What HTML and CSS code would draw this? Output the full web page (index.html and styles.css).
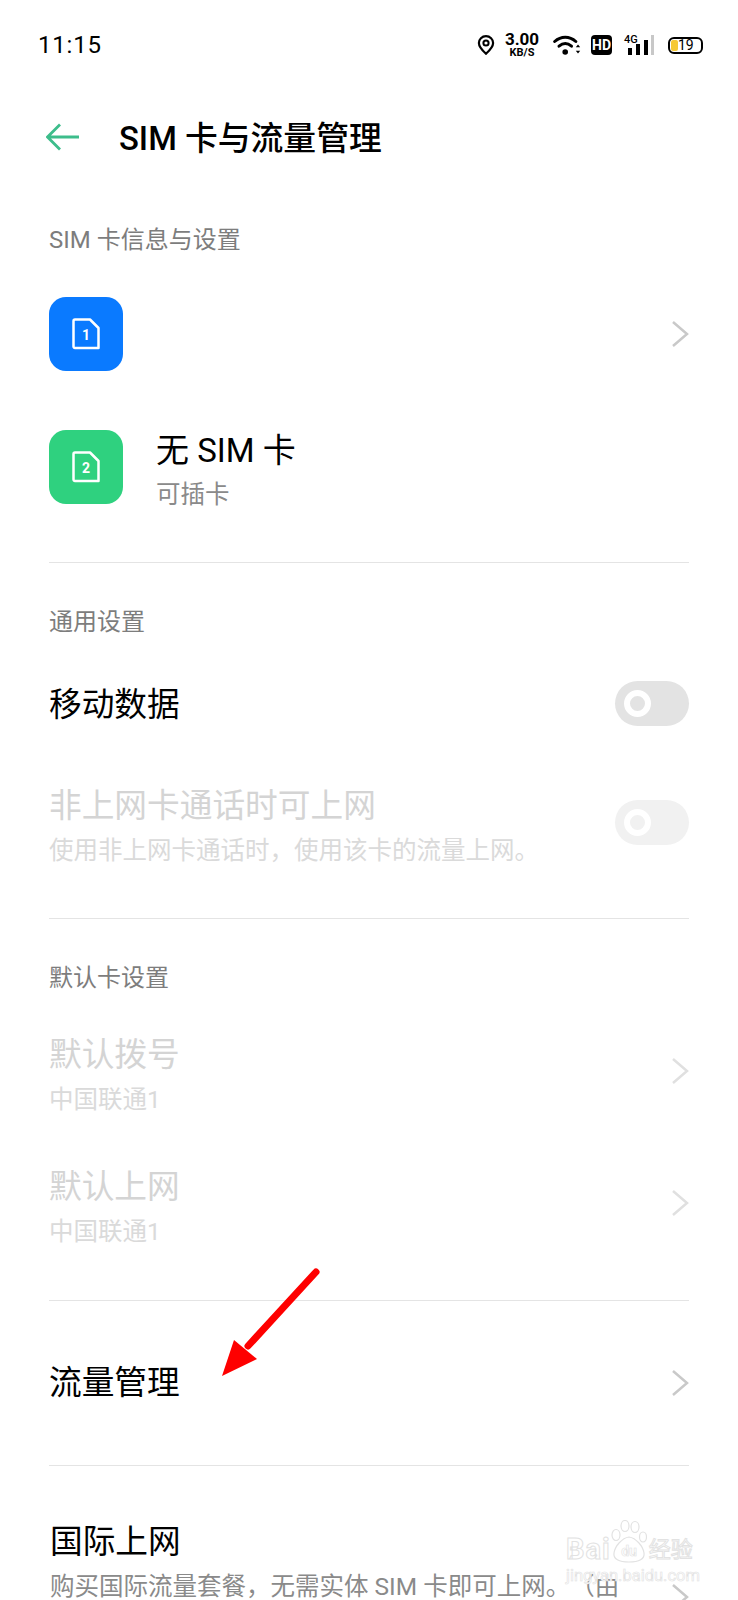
FILE: index.html
```html
<!DOCTYPE html>
<html lang="zh-CN">
<head>
    <meta charset="UTF-8">
    <meta name="viewport" content="width=device-width, initial-scale=1.0">
    <title>SIM 卡与流量管理</title>
    <link rel="stylesheet" href="styles.css">
</head>
<body>
    <div class="screen">
        <div class="status-bar">
            <span class="time">11:15</span>
            <div class="status-icons">
                <svg class="pin" width="18" height="20" viewBox="0 0 18 20"><path d="M9 1.200C4.900 1.200 1.900 4.200 1.900 8c0 4 3.600 7.600 7.100 10.800C12.500 15.600 16.100 12 16.100 8c0-3.800-3-6.800-7.100-6.800z" fill="none" stroke="#000" stroke-width="2.200"/><circle cx="9" cy="8" r="2.600" fill="none" stroke="#000" stroke-width="2"/></svg>
                <div class="speed"><span class="speed-num">3.00</span><span class="speed-unit">KB/S</span></div>
                <svg class="wifi" width="28" height="20" viewBox="0 0 28 20"><g fill="none" stroke="#000" stroke-width="3" stroke-linecap="round"><path d="M1.700 6.500C8 .8 16.500 .8 22.800 6.500"/><path d="M6 11.200C10 7.800 14.500 7.800 18.500 11.200"/></g><circle cx="12.200" cy="17" r="2.800" fill="#000"/><path d="M25 9.500l-2.200 2.800h4.400zM25 18.500l-2.200-2.800h4.400z" fill="#000"/></svg>
                <span class="hd">HD</span>
                <div class="signal">
                    <span class="net">4G</span>
                    <svg width="30" height="20" viewBox="0 0 30 20"><rect x="4" y="13" width="4" height="7" fill="#000"/><rect x="12" y="9" width="4" height="11" fill="#000"/><rect x="20" y="5" width="4" height="15" fill="#000"/><rect x="27" y="0" width="3" height="20" fill="#c8c8c8"/></svg>
                </div>
                <div class="battery"><span class="battery-fill"></span><span class="battery-num">19</span></div>
            </div>
        </div>

        <div class="header">
            <svg class="back" width="34" height="28" viewBox="0 0 34 28"><path d="M33 14H2M14 1.500L1.500 14L14 26.500" fill="none" stroke="#3dbd8b" stroke-width="2.800"/></svg>
            <h1>SIM 卡与流量管理</h1>
        </div>

        <div class="section first">
            <div class="label">SIM 卡信息与设置</div>
            <div class="sim-row">
                <div class="sim-icon blue">
                    <svg width="30" height="34" viewBox="0 0 30 34"><path d="M4 2.500h15l8.500 8.500v20H4a1.500 1.500 0 0 1-1.500-1.500V4A1.500 1.500 0 0 1 4 2.500z" fill="none" stroke="#fff" stroke-width="2.500" stroke-linejoin="round"/><text x="15" y="23" class="sim-num">1</text></svg>
                </div>
                <div class="grow"></div>
                <svg class="chevron" width="18" height="28" viewBox="0 0 18 28"><path d="M2 2l14 12L2 26" fill="none" stroke="#c9c9c9" stroke-width="2.500"/></svg>
            </div>
            <div class="sim-row">
                <div class="sim-icon green">
                    <svg width="30" height="34" viewBox="0 0 30 34"><path d="M4 2.500h15l8.500 8.500v20H4a1.500 1.500 0 0 1-1.500-1.500V4A1.500 1.500 0 0 1 4 2.500z" fill="none" stroke="#fff" stroke-width="2.500" stroke-linejoin="round"/><text x="15" y="23" class="sim-num">2</text></svg>
                </div>
                <div class="grow sim-text">
                    <div class="title">无 SIM 卡</div>
                    <div class="sub">可插卡</div>
                </div>
            </div>
        </div>

        <div class="section general">
            <div class="label">通用设置</div>
            <div class="row data-row">
                <div class="title grow">移动数据</div>
                <div class="toggle"><span class="knob"></span></div>
            </div>
            <div class="row offline-row">
                <div class="grow offline-text">
                    <div class="title off">非上网卡通话时可上网</div>
                    <div class="sub off">使用非上网卡通话时，使用该卡的流量上网。</div>
                </div>
                <div class="toggle off"><span class="knob"></span></div>
            </div>
        </div>

        <div class="section defaults">
            <div class="label">默认卡设置</div>
            <div class="row default-row">
                <div class="grow">
                    <div class="title off">默认拨号</div>
                    <div class="sub off">中国联通1</div>
                </div>
                <svg class="chevron lift" width="18" height="28" viewBox="0 0 18 28"><path d="M2 2l14 12L2 26" fill="none" stroke="#e0e0e0" stroke-width="2.500"/></svg>
            </div>
            <div class="row default-row">
                <div class="grow">
                    <div class="title off">默认上网</div>
                    <div class="sub off">中国联通1</div>
                </div>
                <svg class="chevron lift" width="18" height="28" viewBox="0 0 18 28"><path d="M2 2l14 12L2 26" fill="none" stroke="#e0e0e0" stroke-width="2.500"/></svg>
            </div>
        </div>

        <div class="section">
            <div class="row traffic-row">
                <div class="title grow">流量管理</div>
                <svg class="chevron" width="18" height="28" viewBox="0 0 18 28"><path d="M2 2l14 12L2 26" fill="none" stroke="#c9c9c9" stroke-width="2.500"/></svg>
            </div>
        </div>

        <div class="section">
            <div class="row roam-row">
                <div class="grow">
                    <div class="title roam-title">国际上网</div>
                    <div class="sub">购买国际流量套餐，无需实体 SIM 卡即可上网。（由</div>
                </div>
                <svg class="chevron drop" width="18" height="28" viewBox="0 0 18 28"><path d="M2 2l14 12L2 26" fill="none" stroke="#c9c9c9" stroke-width="2.500"/></svg>
            </div>
        </div>

        <!-- red arrow drawn on top of the screenshot -->
        <svg class="red-arrow" width="110" height="120" viewBox="0 0 110 120"><path d="M96 7L28 81" stroke="#fe0000" stroke-width="7" stroke-linecap="round"/><path d="M2 111L14 75L37 94z" fill="#fe0000"/></svg>

        <div class="watermark">
            <div class="wm-top">
                <span class="wm-bai">Bai</span>
                <svg width="36" height="44" viewBox="0 0 36 44"><g fill="none" stroke="#e2e2e2" stroke-width="1.200"><ellipse cx="5" cy="15" rx="4" ry="5.500"/><ellipse cx="14" cy="6" rx="4" ry="5.500"/><ellipse cx="24" cy="7" rx="4" ry="5.500"/><ellipse cx="32" cy="17" rx="3.500" ry="5"/><path d="M18 17C11 18 4 26 3 33c-1 6 5 9 15 9s16-3 15-9c-1-7-8-15-15-16z"/></g><text x="18" y="36" class="wm-du">du</text></svg>
                <span class="wm-jy">经验</span>
            </div>
            <div class="wm-url">jingyan.baidu.com</div>
        </div>
    </div>
</body>
</html>
```

FILE: styles.css
```css
* {
    box-sizing: border-box;
}
html, body {
    margin: 0;
    padding: 0;
    background: #fff;
}
body {
    font-family: Roboto, "Noto Sans CJK SC", sans-serif;
    color: #000;
    text-spacing-trim: space-all;
}
.screen {
    position: relative;
    width: 738px;
    height: 1600px;
    overflow: hidden;
    background: #fff;
}
.grow {
    flex: 1;
    min-width: 0;
}

/* status bar */
.status-bar {
    height: 90px;
    display: flex;
    align-items: center;
    justify-content: space-between;
    padding: 0 35px 0 38px;
}
.time {
    font-size: 24px;
    letter-spacing: 0.800px;
}
.status-icons {
    display: flex;
    align-items: center;
}
.speed {
    display: flex;
    flex-direction: column;
    align-items: center;
    width: 34px;
    margin-left: 10px;
    font-weight: 700;
}
.speed-num {
    font-size: 17px;
    line-height: 16px;
}
.speed-unit {
    font-size: 11px;
    line-height: 12px;
}
.wifi {
    margin-left: 14px;
}
.hd {
    width: 21px;
    height: 20px;
    margin-left: 10px;
    border-radius: 4px;
    background: #000;
    color: #fff;
    font-size: 14px;
    font-weight: 700;
    line-height: 20px;
    text-align: center;
}
.signal {
    position: relative;
    width: 30px;
    height: 20px;
    margin-left: 12px;
}
.net {
    position: absolute;
    left: 0;
    top: -1px;
    font-size: 11px;
    line-height: 12px;
    font-weight: 500;
}
.battery {
    position: relative;
    width: 35px;
    height: 17px;
    margin-left: 14px;
    border: 2px solid #000;
    border-radius: 6px;
    font-size: 14px;
    line-height: 13px;
}
.battery-fill {
    position: absolute;
    left: 1px;
    top: 1px;
    width: 7px;
    height: 11px;
    border-radius: 2px;
    background: #f6c935;
}
.battery-num {
    position: absolute;
    left: 8px;
    top: 0;
}

/* header */
.header {
    height: 94px;
    display: flex;
    align-items: center;
    padding-left: 46px;
}
.back {
    margin-right: 39px;
}
h1 {
    margin: 0 0 3px;
    font-size: 32.800px;
    font-weight: 500;
}

/* sections */
.section {
    margin: 0 49px;
    border-top: 1px solid #e4e4e4;
}
.section.first {
    padding-top: 39px;
    border-top: 0;
    height: 378px;
}
.label {
    font-size: 24px;
    line-height: 34px;
    color: #7d7d7d;
}
.general .label, .defaults .label {
    margin-top: 42px;
}
.title {
    font-size: 32.700px;
    line-height: 45px;
}
.sub {
    font-size: 24.500px;
    line-height: 44px;
    color: #8a8a8a;
}
.title.off {
    color: #d4d4d4;
}
.sub.off {
    color: #dadada;
}
.row {
    display: flex;
    align-items: center;
}
.chevron {
    flex: none;
}

/* sim rows */
.sim-row {
    height: 133px;
    display: flex;
    align-items: center;
}
.section.first .label {
    margin-bottom: 10px;
}
.sim-icon {
    flex: none;
    width: 74px;
    height: 74px;
    display: flex;
    align-items: center;
    justify-content: center;
    border-radius: 17px;
}
.blue {
    background: #0a7aff;
}
.green {
    background: #2fd17f;
}
.sim-num {
    fill: #fff;
    font-size: 14px;
    font-weight: 700;
    text-anchor: middle;
}
.sim-text {
    margin-left: 33px;
    padding-top: 11px;
}
.sim-text .title {
    font-size: 33px;
}

/* general */
.general {
    height: 356px;
}
.general .label {
    margin-bottom: 21px;
}
.data-row {
    height: 86px;
}
.data-row .title {
    padding-top: 4px;
}
.offline-row {
    height: 152px;
}
.offline-text {
    padding-top: 12px;
}
.toggle {
    position: relative;
    flex: none;
    width: 74px;
    height: 45px;
    border-radius: 23px;
    background: #e3e3e3;
}
.toggle.off {
    background: #f1f1f1;
}
.knob {
    position: absolute;
    left: 9px;
    top: 9px;
    width: 27px;
    height: 27px;
    border: 6px solid #fff;
    border-radius: 50%;
}

/* default sim */
.defaults {
    height: 382px;
}
.defaults .label {
    margin-bottom: 16px;
}
.default-row {
    height: 132px;
}
.lift {
    margin-bottom: 12px;
}
.traffic-row {
    height: 164px;
}
.roam-row {
    align-items: flex-start;
    padding-top: 54px;
    padding-left: 1px;
}
.roam-title {
    width: fit-content;
}
.roam-row .sub {
    white-space: nowrap;
}
.drop {
    margin-top: 63px;
}

/* overlays */
.red-arrow {
    position: absolute;
    left: 220px;
    top: 1265px;
}
.watermark {
    position: absolute;
    left: 566px;
    top: 1520px;
    width: 136px;
    color: #fff;
}
.wm-top {
    display: flex;
    align-items: flex-end;
    height: 44px;
}
.wm-bai {
    font-size: 29px;
    font-weight: 700;
    line-height: 30px;
    letter-spacing: 1px;
    -webkit-text-stroke: 1px #e2e2e2;
}
.wm-du {
    fill: #fff;
    stroke: #e2e2e2;
    stroke-width: 0.600px;
    font-size: 14px;
    font-weight: 700;
    text-anchor: middle;
}
.wm-jy {
    margin-left: 2px;
    font-size: 22px;
    line-height: 28px;
    -webkit-text-stroke: 1px #e2e2e2;
}
.wm-url {
    font-size: 16.500px;
    line-height: 18px;
    margin-top: 3px;
    white-space: nowrap;
    -webkit-text-stroke: 0.600px #e2e2e2;
}
```
